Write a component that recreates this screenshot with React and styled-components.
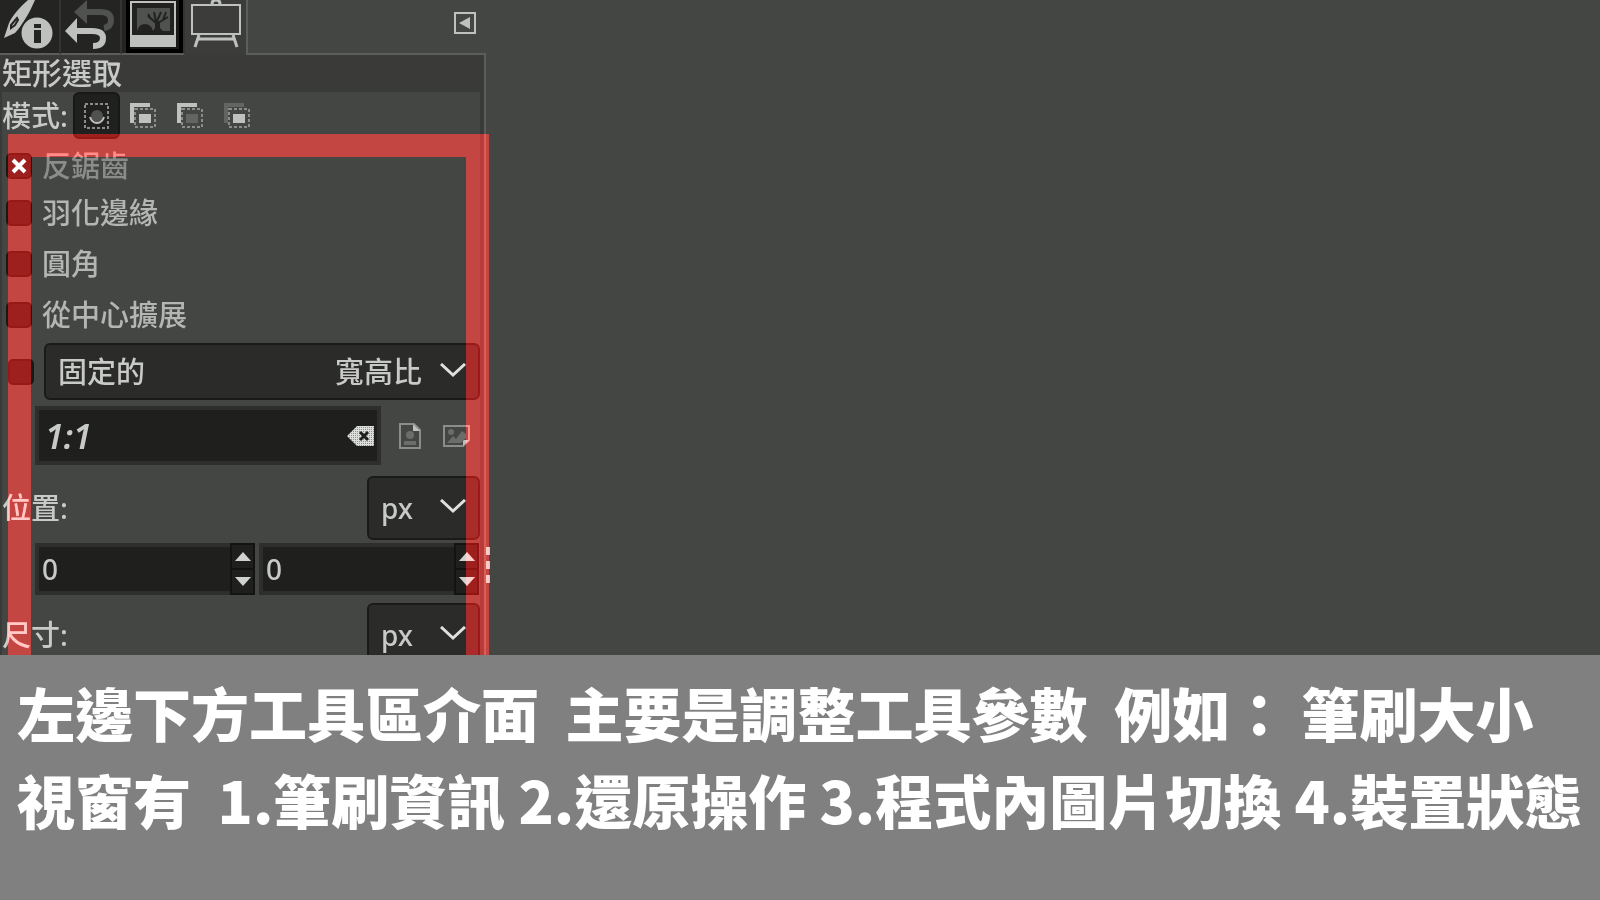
import React from "react"
import styled, { createGlobalStyle } from "styled-components"

const LIGHT = `#bfc1be`
const DIM = `#8b8d8a`
const LINE = `#5c5e5b`

const modes = [
  { id: `replace`, label: `取代目前的選取區域` },
  { id: `add`, label: `加入目前的選取區域` },
  { id: `subtract`, label: `由目前的選取區域減去` },
  { id: `intersect`, label: `與目前的選取區域相交` },
]

const toggles = [
  { id: `antialias`, label: `反鋸齒`, checked: true, dim: true },
  { id: `feather`, label: `羽化邊緣` },
  { id: `rounded`, label: `圓角` },
  { id: `center`, label: `從中心擴展` },
]

const BrushInfoIcon = () => (
  <svg width="59" height="53" viewBox="0 0 59 53">
    <path d="M35 0 L28 0 C20 7 12 16 9 23 L4 38 L15 33 C21 27 30 12 35 0Z" fill={LIGHT} />
    <path d="M17 18 L11 25 L11 28 L15 25 L18 20Z" fill="none" stroke="#242522" strokeWidth="2" />
    <circle cx="37" cy="33" r="17" fill="#242522" />
    <circle cx="37" cy="33" r="15.5" fill={LIGHT} />
    <path d="M34 24h7v4h-7z M34 30h7v13h-7z" fill="#242522" />
  </svg>
)

const UndoIcon = () => (
  <svg width="59" height="53" viewBox="0 0 59 53">
    <path d="M13 12 L26 0 V24Z" fill="#50524f" />
    <path d="M25 12 H39 Q50 12 50 20 Q50 27 43 28" fill="none" stroke="#50524f" strokeWidth="6" />
    <path d="M4 31 L16 18 V43Z" fill={LIGHT} />
    <path d="M15 31 H31 Q42 31 42 38 Q42 46 32 46" fill="none" stroke={LIGHT} strokeWidth="6" />
  </svg>
)

const ImagesIcon = () => (
  <svg width="61" height="53" viewBox="0 0 61 53">
    <rect x="6" y="-2" width="53" height="53" fill="#191a18" stroke="#000" strokeWidth="4" />
    <rect x="9" y="2" width="44" height="44" fill="#222321" stroke={LIGHT} strokeWidth="2" />
    <rect x="9" y="35" width="44" height="11" fill={LIGHT} />
    <rect x="15" y="8" width="33" height="23" fill="#50524f" />
    <path d="M15 31 Q17 24 23 24 Q29 24 31 31Z" fill="#222321" />
    <path d="M34 23 L26 16 M34 22 L32 12 M35 21 L39 12 M36 23 L46 17 M29 19 L26 14 M41 20 L44 12" fill="none" stroke="#222321" strokeWidth="2" />
    <path d="M31 31 L33 28 V21 H38 V28 L41 31Z" fill="#222321" />
  </svg>
)

const EaselIcon = () => (
  <svg width="61" height="53" viewBox="0 0 61 53">
    <path d="M27 4 Q27 0 31 0 Q35 0 35 4" fill="none" stroke={LIGHT} strokeWidth="3" />
    <rect x="7" y="5" width="48" height="29" fill="none" stroke={LIGHT} strokeWidth="2" />
    <path d="M14 35 L10 47 M48 35 L52 47" stroke={LIGHT} strokeWidth="3" />
    <path d="M12 39 H50" stroke={LIGHT} strokeWidth="3" />
  </svg>
)

const ModeIcon = ({ mode }) => {
  if (mode === `replace`) {
    return (
      <svg width="28" height="28" viewBox="0 0 28 28">
        <rect x="2" y="2" width="23" height="24" fill="none" stroke={DIM} strokeWidth="2" strokeDasharray="3 2" />
        <circle cx="14" cy="14" r="6" fill="#50524f" />
        <path d="M7 15 Q9 21 14 21 Q19 21 21 15" fill="none" stroke={LIGHT} strokeWidth="2" />
      </svg>
    )
  }
  const back = mode === `intersect` ? `#636562` : LIGHT
  const front = mode === `subtract` ? `#636562` : LIGHT
  return (
    <svg width="28" height="28" viewBox="0 0 28 28">
      <path d="M0 1 H20 V5 H4 V21 H0Z" fill={back} />
      <rect x="5" y="7" width="20" height="18" fill="none" stroke={DIM} strokeWidth="2" strokeDasharray="3 2" />
      <rect x="9" y="11" width="12" height="11" fill="#444643" />
      <rect x="9" y="12" width="12" height="9" fill={front} />
    </svg>
  )
}

const MenuIcon = () => (
  <svg width="22" height="22" viewBox="0 0 22 22">
    <rect x="1" y="1" width="20" height="20" fill="none" stroke={LIGHT} strokeWidth="2" />
    <path d="M5 11 L16 5 V17Z" fill={LIGHT} />
  </svg>
)

const ClearIcon = () => (
  <svg width="28" height="22" viewBox="0 0 28 22">
    <defs>
      <pattern id="grain" width="2" height="2" patternUnits="userSpaceOnUse">
        <rect width="2" height="2" fill="#dcdedb" />
        <rect width="1" height="1" fill="#8f918e" />
      </pattern>
    </defs>
    <path d="M0 11 L10 1 H27 V21 H10Z" fill="url(#grain)" />
    <path d="M13 7 L21 15 M21 7 L13 15" stroke="#1f201e" strokeWidth="3" />
  </svg>
)

const PortraitIcon = () => (
  <svg width="26" height="26" viewBox="0 0 26 26">
    <path d="M1 1 H15 L21 7 V25 H1Z" fill="none" stroke={DIM} strokeWidth="2" />
    <path d="M14 1 L21 8 H14Z" fill={LIGHT} />
    <circle cx="11" cy="12" r="4" fill="#6b6d6a" />
    <path d="M5 22 V18 H17 V22Z" fill="#6b6d6a" />
  </svg>
)

const LandscapeIcon = () => (
  <svg width="27" height="22" viewBox="0 0 27 22">
    <path d="M1 1 H26 V15 L20 21 H1Z" fill="none" stroke={DIM} strokeWidth="2" />
    <path d="M20 15 H26 L20 21Z" fill={LIGHT} />
    <circle cx="8" cy="7" r="3" fill="#6b6d6a" />
    <path d="M4 18 L10 11 L13 14 L19 6 L23 9 V13 L18 18Z" fill="#6b6d6a" />
  </svg>
)

const Chevron = () => (
  <ChevronSvg width="26" height="18" viewBox="0 0 26 18">
    <path d="M1 1 L13 12 L25 1" fill="none" stroke="#dfe1de" strokeWidth="3" />
  </ChevronSvg>
)

const Spin = ({ label }) => (
  <SpinBox>
    <SpinInput type="text" inputMode="numeric" defaultValue="0" aria-label={label} />
    <SpinButtons>
      <SpinButton type="button" aria-label={`${label} 增加`}>
        <svg width="16" height="9" viewBox="0 0 16 9"><path d="M0 9 L8 0 L16 9Z" fill="#d0d2cf" /></svg>
      </SpinButton>
      <SpinButton type="button" aria-label={`${label} 減少`}>
        <svg width="16" height="9" viewBox="0 0 16 9"><path d="M0 0 L8 9 L16 0Z" fill="#d0d2cf" /></svg>
      </SpinButton>
    </SpinButtons>
  </SpinBox>
)

const UnitRow = ({ id, label }) => (
  <UnitLine>
    <Label htmlFor={id}>{label}</Label>
    <UnitBox>
      <UnitSelect id={id} defaultValue="px">
        <option>px</option>
        <option>mm</option>
      </UnitSelect>
      <Chevron />
    </UnitBox>
  </UnitLine>
)

const Check = ({ id, checked, label }) => (
  <CheckCell>
    <CheckInput id={id} type="checkbox" defaultChecked={checked} aria-label={label} />
    {checked && (
      <CheckMark width="18" height="18" viewBox="0 0 18 18">
        <path d="M3 3 L15 15 M15 3 L3 15" stroke="#fff" strokeWidth="4" />
      </CheckMark>
    )}
  </CheckCell>
)

const App = () => (
  <Page>
    <GlobalStyle />
    <Stage>
      <Dock>
        <Tabs role="tablist">
          <Tab type="button" role="tab" aria-label="筆刷資訊"><BrushInfoIcon /></Tab>
          <Tab type="button" role="tab" aria-label="還原操作"><UndoIcon /></Tab>
          <Tab type="button" role="tab" aria-label="圖片"><ImagesIcon /></Tab>
          <Tab type="button" role="tab" aria-label="裝置狀態" aria-selected="true" $active><EaselIcon /></Tab>
          <TabsRest>
            <MenuButton type="button" aria-label="設定此分頁"><MenuIcon /></MenuButton>
          </TabsRest>
        </Tabs>
        <Panel>
          <Title>矩形選取</Title>
          <Options>
            <ModeRow>
              <ModeLabel>模式:</ModeLabel>
              {modes.map(({ id, label }) => (
                <ModeButton key={id} type="button" aria-label={label} $active={id === `replace`}>
                  <ModeIcon mode={id} />
                </ModeButton>
              ))}
            </ModeRow>
            <ToggleList>
              {toggles.map(({ id, label, checked, dim }) => (
                <Toggle key={id} $dim={dim}>
                  <Check id={id} checked={checked} />
                  <Label htmlFor={id}>{label}</Label>
                </Toggle>
              ))}
            </ToggleList>
            <FixedRow>
              <Check id="fixed" label="固定的" />
              <FixedBox>
                <Label htmlFor="fixed-kind">固定的</Label>
                <FixedSelect id="fixed-kind" defaultValue="寬高比">
                  <option>寬高比</option>
                  <option>寬度</option>
                  <option>高度</option>
                </FixedSelect>
                <Chevron />
              </FixedBox>
            </FixedRow>
            <RatioRow>
              <RatioBox>
                <RatioInput type="text" defaultValue="1:1" aria-label="寬高比" />
                <PlainButton type="button" aria-label="清除"><ClearIcon /></PlainButton>
              </RatioBox>
              <PlainButton type="button" aria-label="直向"><PortraitIcon /></PlainButton>
              <PlainButton type="button" aria-label="橫向"><LandscapeIcon /></PlainButton>
            </RatioRow>
            <UnitRow id="position-unit" label="位置:" />
            <SpinRow>
              <Spin label="X" />
              <Spin label="Y" />
            </SpinRow>
            <UnitRow id="size-unit" label="尺寸:" />
          </Options>
        </Panel>
        <Grip><i /><i /><i /></Grip>
        <Highlight />
      </Dock>
    </Stage>
    <Caption>
      <p>{`左邊下方工具區介面  主要是調整工具參數  例如： 筆刷大小`}</p>
      <p>{`視窗有  1.筆刷資訊 2.還原操作 3.程式內圖片切換 4.裝置狀態`}</p>
    </Caption>
  </Page>
)

const GlobalStyle = createGlobalStyle`
  *, *::before, *::after {
    box-sizing: border-box;
  }
  body {
    margin: 0;
    background: #444643;
    color: #c8cac7;
    font-family: "Noto Sans", "Noto Sans CJK TC", sans-serif;
    font-size: 28px;
    font-weight: 500;
    line-height: 40px;
  }
  button, input, select {
    margin: 0;
    padding: 0;
    border: 0;
    border-radius: 0;
    outline: 0;
    background: none;
    color: inherit;
    font: inherit;
  }
  svg {
    display: block;
  }
`

const Page = styled.div`
  display: flex;
  flex-direction: column;
  height: 100vh;
`

const Stage = styled.main`
  flex: 1;
  min-height: 0;
  overflow: hidden;
`

const Dock = styled.section`
  position: relative;
  width: 100%;
  max-width: 486px;
`

const Tabs = styled.div`
  display: flex;
  height: 55px;
`

const Tab = styled.button`
  overflow: hidden;
  background: ${({ $active }) => ($active ? `#3c3d3a` : `#242522`)};
  border-right: 2px solid ${({ $active }) => ($active ? LINE : `#343532`)};
  border-bottom: ${({ $active }) => ($active ? `0` : `2px solid ${LINE}`)};
  display: flex;
  align-items: flex-start;
`

const TabsRest = styled.div`
  flex: 1;
  display: flex;
  justify-content: flex-end;
  padding: 12px 10px 0 0;
  border-bottom: 2px solid ${LINE};
`

const MenuButton = styled.button`
  width: 22px;
  height: 22px;
`

const Panel = styled.div`
  background: #3a3b38;
  border-right: 2px solid ${LINE};
  padding: 0 4px 0 2px;
`

const Title = styled.h1`
  margin: 0;
  height: 37px;
  font-size: 30px;
  font-weight: 500;
  line-height: 36px;
`

const Label = styled.label`
  font-size: 29px;
`

const Options = styled.div`
  background: #444643;
  padding-bottom: 20px;
`

const ModeRow = styled.div`
  display: flex;
  align-items: center;
  height: 47px;
`

const ModeLabel = styled.span`
  width: 71px;
  font-size: 29px;
`

const ModeButton = styled.button`
  display: grid;
  place-items: center;
  width: 47px;
  height: 47px;
  border-radius: 6px;
  background: ${({ $active }) => ($active ? `#20211f` : `transparent`)};
  border: 2px solid ${({ $active }) => ($active ? `#181917` : `transparent`)};
`

const ToggleList = styled.div`
  padding: 3px 0 5px 4px;
`

const Toggle = styled.div`
  display: flex;
  align-items: center;
  gap: 10px;
  height: 47px;
  color: ${({ $dim }) => ($dim ? `#8b8d8a` : `#b4b6b3`)};

  &:nth-child(n + 3) {
    margin-top: 4px;
  }
`

const CheckCell = styled.span`
  display: grid;
  place-items: center;
`

const CheckInput = styled.input`
  grid-area: 1 / 1;
  appearance: none;
  width: 26px;
  height: 26px;
  border: 2px solid #181917;
  border-radius: 5px;
  background: #1f201e;
`

const CheckMark = styled.svg`
  grid-area: 1 / 1;
  z-index: 1;
  pointer-events: none;
`

const FixedRow = styled.div`
  display: flex;
  align-items: center;
  gap: 10px;
  padding-left: 6px;
`

const FixedBox = styled.div`
  flex: 1;
  display: flex;
  align-items: center;
  gap: 18px;
  height: 57px;
  padding: 0 12px;
  border: 2px solid #1a1b19;
  border-radius: 6px;
  background: #2b2c2a;
`

const FixedSelect = styled.select`
  flex: 1;
  appearance: none;
  font-size: 29px;
  text-align: right;
  text-align-last: right;
`

const ChevronSvg = styled.svg`
  flex: none;
  pointer-events: none;
`

const RatioRow = styled.div`
  display: flex;
  align-items: center;
  gap: 18px;
  padding: 6px 10px 11px 33px;
`

const RatioBox = styled.div`
  flex: 1;
  min-width: 0;
  display: flex;
  align-items: center;
  height: 59px;
  padding: 0 2px 0 6px;
  border: 4px solid #2e2f2d;
  background: #1f201e;
`

const RatioInput = styled.input`
  flex: 1;
  min-width: 0;
  font-size: 34px;
  font-style: italic;
  font-weight: 600;
`

const PlainButton = styled.button`
  flex: none;
`

const UnitLine = styled.div`
  display: flex;
  align-items: center;
  justify-content: space-between;
`

const UnitBox = styled.div`
  display: flex;
  align-items: center;
  width: 113px;
  height: 64px;
  padding: 0 12px;
  border: 2px solid #1a1b19;
  border-radius: 6px;
  background: #2b2c2a;
`

const UnitSelect = styled.select`
  flex: 1;
  min-width: 0;
  appearance: none;
`

const SpinRow = styled.div`
  display: grid;
  grid-template-columns: repeat(2, minmax(0, 1fr));
  gap: 4px;
  padding: 3px 1px 8px 33px;
`

const SpinBox = styled.div`
  display: flex;
  height: 52px;
  background: #1f201e;
  border: 4px solid #2e2f2d;
  border-right: 0;
`

const SpinInput = styled.input`
  flex: 1;
  min-width: 0;
  padding-left: 3px;
`

const SpinButtons = styled.div`
  display: grid;
  gap: 2px;
  width: 25px;
  margin: -4px 0;
  background: #131412;
  border: 2px solid #131412;
`

const SpinButton = styled.button`
  display: grid;
  place-items: center;
  background: #1f201e;
`

/* drag handle of the dock, sits on the panel edge */
const Grip = styled.div`
  position: absolute;
  left: 100%;
  top: 547px;
  display: grid;
  gap: 6px;

  i {
    width: 4px;
    height: 8px;
    background: #c8cac7;
  }
`

const Highlight = styled.div`
  position: absolute;
  top: 134px;
  left: 8px;
  right: -3px;
  bottom: -40px;
  border: 23px solid #7f0000;
  mix-blend-mode: plus-lighter;
  pointer-events: none;
`

const Caption = styled.footer`
  padding: 14px 17px 57px;
  background: #808080;
  color: #fff;
  font-family: "Noto Sans CJK TC", sans-serif;
  font-size: 58px;
  font-weight: 900;
  line-height: 87px;
  white-space: pre;

  p {
    margin: 0;
  }
`

export default App
